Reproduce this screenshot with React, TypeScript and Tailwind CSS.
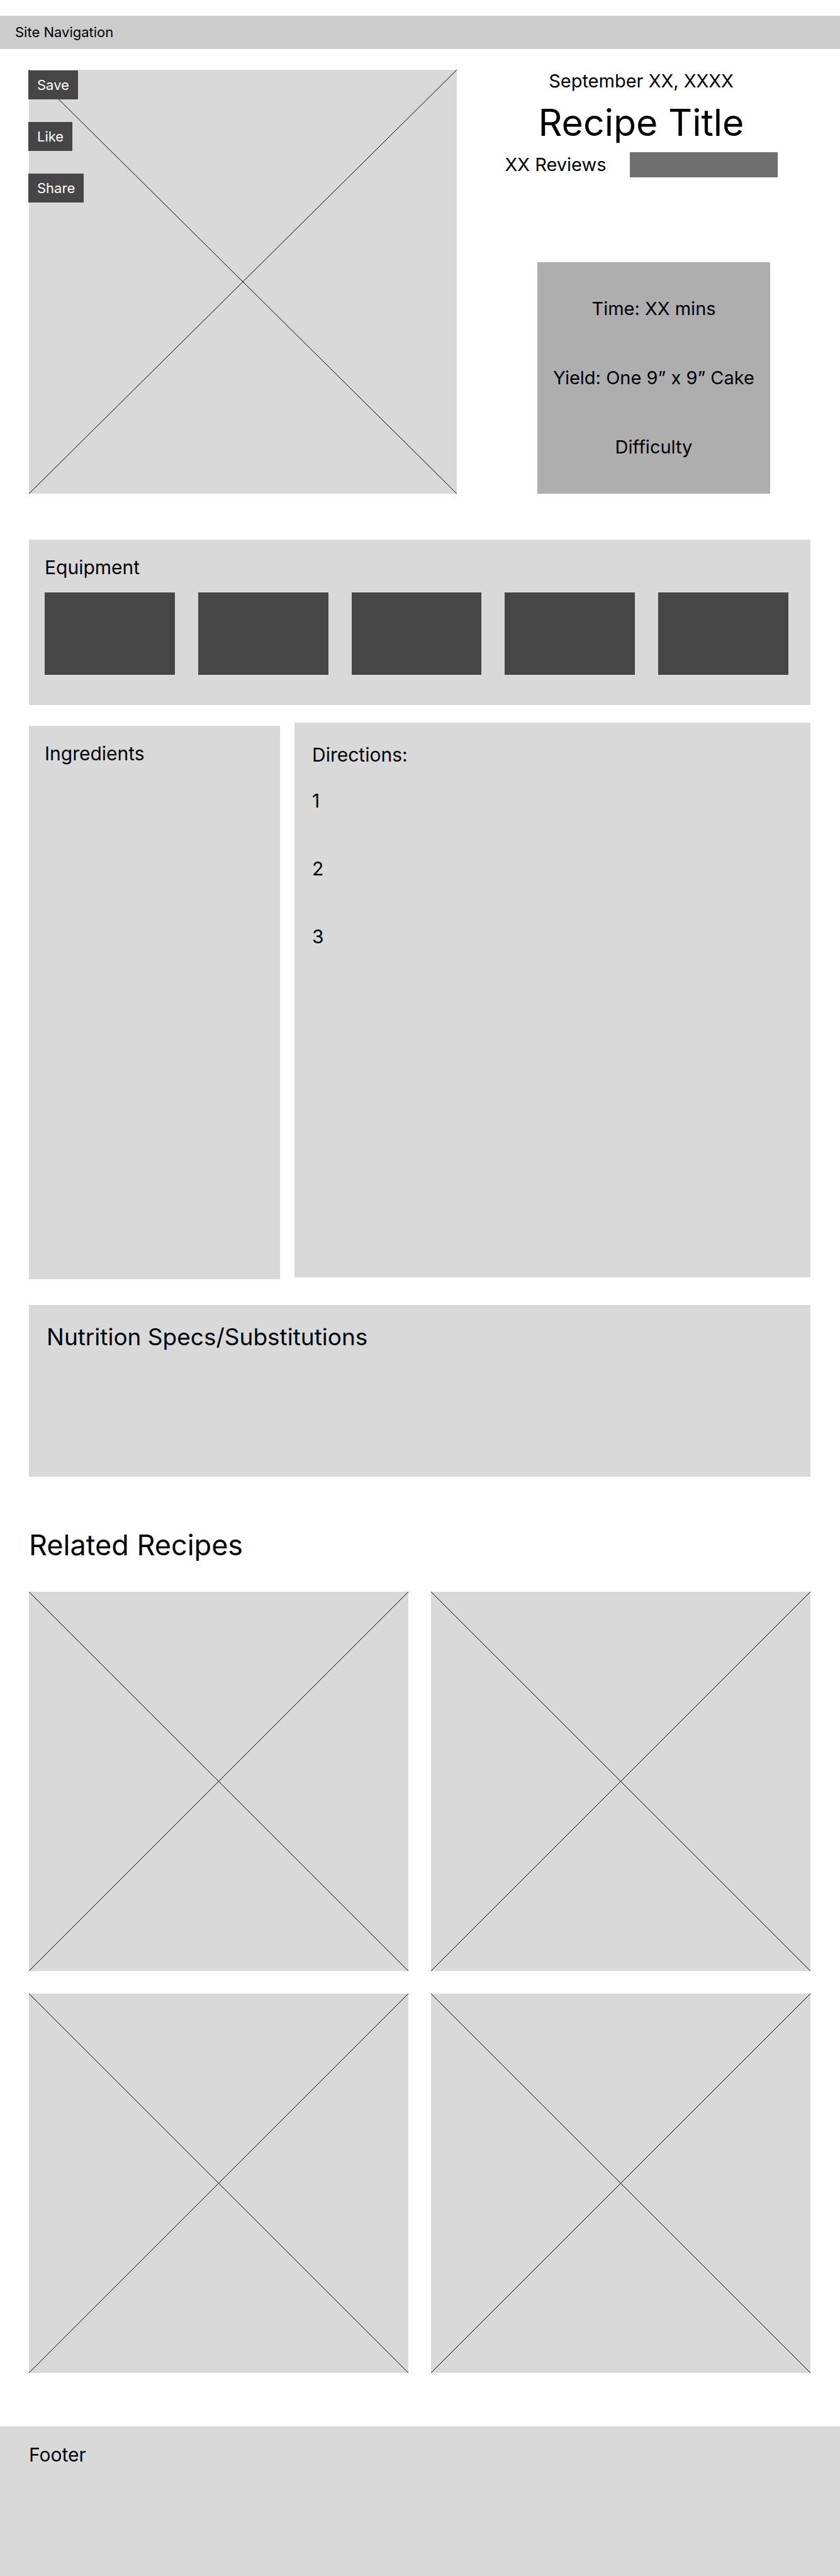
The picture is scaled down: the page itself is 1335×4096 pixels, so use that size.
const actions = ["Save", "Like", "Share"];
const facts = ["Time: XX mins", "Yield: One 9” x 9” Cake", "Difficulty"];
const equipment = [1, 2, 3, 4, 5];
const steps = [1, 2, 3];
const related = [1, 2, 3, 4];

/** Crossed box that stands in for a picture. */
function CrossedBox({ label }: { label: string }) {
  return (
    <svg role="img" aria-label={label} className="block h-full w-full overflow-visible bg-[#d9d9d9] stroke-black">
      <line x1="0" y1="0" x2="100%" y2="100%" />
      <line x1="0" y1="100%" x2="100%" y2="0" />
    </svg>
  );
}

export default function App() {
  return (
    <div className="bg-white pt-[25px] font-['Inter',sans-serif] text-[30px] leading-[36px] text-black">
      <nav className="flex h-[53px] items-center bg-[#cccccc] px-6 text-[22px] leading-[27px]">
        Site Navigation
      </nav>

      <main className="pt-[33px] pr-[47px] pl-[46px]">
        <section className="grid grid-cols-[680fr_562fr]">
          <div className="relative aspect-[680/674]">
            <CrossedBox label="Recipe photo" />
            <div className="absolute top-px -left-px flex flex-col items-start gap-9">
              {actions.map((action) => (
                <button
                  key={action}
                  type="button"
                  className="h-[46px] bg-[#464646] px-3.5 text-[22px] leading-[27px] text-white"
                >
                  {action}
                </button>
              ))}
            </div>
          </div>

          <div className="flex flex-col items-center justify-between pl-6 text-[29px]">
            <header className="flex flex-col items-center gap-3">
              <p>September XX, XXXX</p>
              <h1 className="text-[59px] leading-[71px]">Recipe Title</h1>
              <div className="flex items-center gap-[37px]">
                <span>XX Reviews</span>
                <div role="img" aria-label="Rating" className="h-10 w-[235px] bg-[#707070]" />
              </div>
            </header>
            <ul className="ml-10 flex h-[368px] w-[370px] flex-col items-center justify-center gap-[74px] bg-[#aeaeae]">
              {facts.map((fact) => (
                <li key={fact} className="whitespace-nowrap">
                  {fact}
                </li>
              ))}
            </ul>
          </div>
        </section>

        <section className="mt-[73px] bg-[#d9d9d9] pt-[26px] pr-[35px] pb-12 pl-[25px]">
          <h2>Equipment</h2>
          <div className="mt-[22px] grid grid-cols-5 gap-[37px]">
            {equipment.map((item) => (
              <div key={item} className="h-[131px] bg-[#464646]" />
            ))}
          </div>
        </section>

        <div className="mt-7 grid grid-cols-[399fr_820fr] items-start gap-[23px]">
          <section className="mt-[5px] min-h-[880px] bg-[#d9d9d9] px-[25px] pt-[26px]">
            <h2>Ingredients</h2>
          </section>
          <section className="min-h-[882px] bg-[#d9d9d9] px-7 pt-[33px]">
            <h2>Directions:</h2>
            <ol className="mt-[37px] flex flex-col gap-[72px]">
              {steps.map((step) => (
                <li key={step}>{step}</li>
              ))}
            </ol>
          </section>
        </div>

        <section className="mt-[41px] min-h-[273px] bg-[#d9d9d9] px-7 pt-7 text-[37px] leading-[45px]">
          <h2>Nutrition Specs/Substitutions</h2>
        </section>

        <section className="mt-[82px]">
          <h2 className="text-[45px] leading-[54px]">Related Recipes</h2>
          <div className="mt-[47px] grid grid-cols-2 gap-9">
            {related.map((item) => (
              <a key={item} href="#" className="block aspect-square">
                <CrossedBox label={`Related recipe ${item}`} />
              </a>
            ))}
          </div>
        </section>
      </main>

      <footer className="mt-[85px] min-h-[238px] bg-[#d9d9d9] px-[46px] pt-[27px]">Footer</footer>
    </div>
  );
}
